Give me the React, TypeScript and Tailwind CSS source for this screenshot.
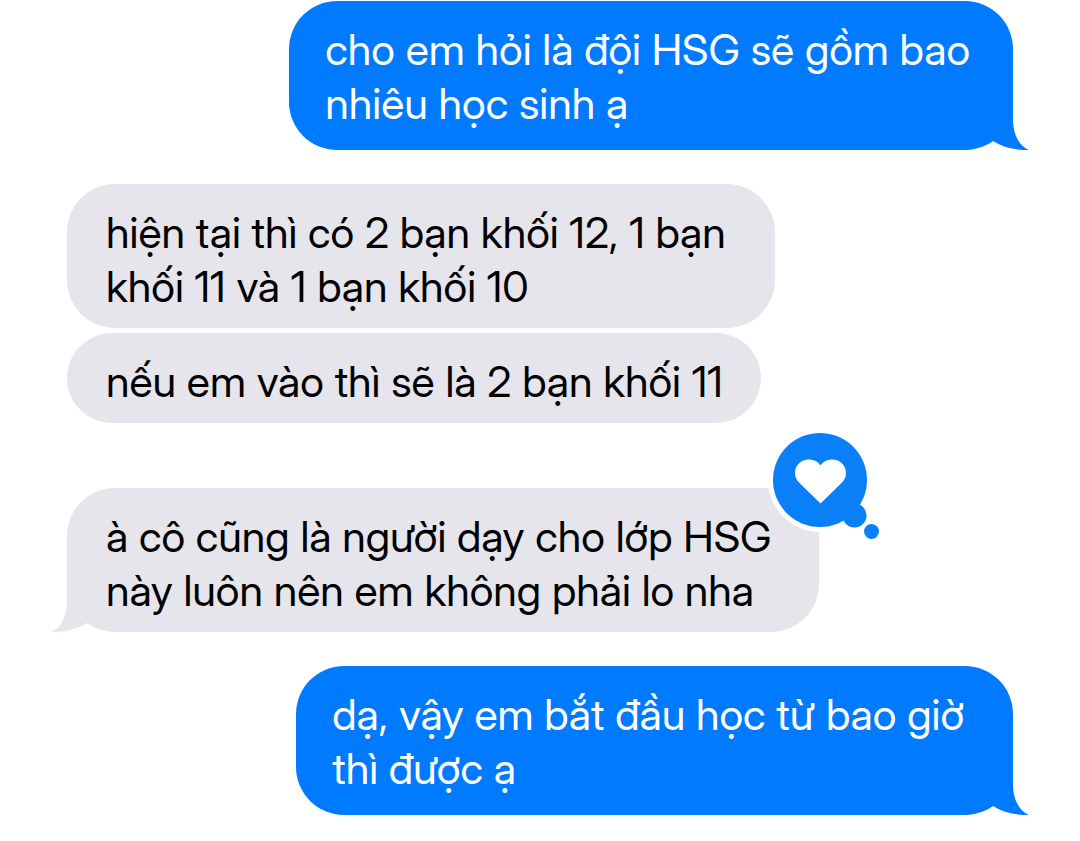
import type { ReactNode } from "react";

type Side = "sent" | "received";

interface BubbleProps {
  side: Side;
  tail?: boolean;
  loved?: boolean;
  className: string;
  children: ReactNode;
}

function Tail({ side }: { side: Side }) {
  if (side === "sent") {
    return (
      <svg className="absolute -right-4 bottom-0 h-12 w-10 text-[#007aff]" viewBox="0 0 40 48" fill="currentColor" aria-hidden="true">
        <path d="M24 0V18C24 32 30 44 40 48C25 48 13 45 4 39L0 20Z" />
      </svg>
    );
  }
  return (
    <svg className="absolute -left-4 bottom-0 h-12 w-10 text-[#e6e5eb]" viewBox="0 0 40 48" fill="currentColor" aria-hidden="true">
      <path d="M16 0V18C16 32 10 44 0 48C15 48 27 45 36 39L40 20Z" />
    </svg>
  );
}

function Reaction() {
  return (
    <svg className="absolute -top-15 -right-15 h-28 w-28" viewBox="0 0 112 112" role="img" aria-label="Loved">
      <circle cx="53" cy="52" r="52" fill="#fff" />
      <circle cx="53" cy="52" r="47" fill="#0a80f8" />
      <circle cx="87.5" cy="87.5" r="12" fill="#0a80f8" />
      <circle cx="104.5" cy="103.5" r="7.5" fill="#0a80f8" />
      <path
        d="M53.5 37.5C56 33.500 60.500 31.500 65.500 31.500C73 31.500 79 37.500 79 45C79 49 77.500 52 75 54.500L53.500 75.500L32 54.500C29.500 52 28 49 28 45C28 37.500 34 31.500 41.500 31.500C46.500 31.500 51 33.500 53.500 37.500Z"
        fill="#fff"
      />
    </svg>
  );
}

function Bubble({ side, tail, loved, className, children }: BubbleProps) {
  const colors =
    side === "sent"
      ? "self-end bg-[#007aff] text-white pl-9 pt-[21px] pb-5"
      : "self-start bg-[#e6e5eb] text-black pl-[39px] pt-[21px] pb-[15px]";
  return (
    <div className={`relative w-fit rounded-[48px] ${colors} ${className}`}>
      {tail && <Tail side={side} />}
      {loved && <Reaction />}
      <p className="relative whitespace-nowrap">{children}</p>
    </div>
  );
}

export default function App() {
  return (
    <main className="flex flex-col bg-white px-[67px] font-['Inter_Display','Inter',sans-serif] text-[43px] leading-[54px]">
      <Bubble side="sent" tail className="mt-px pr-[43px]">
        cho em hỏi là đội HSG sẽ gồm bao
        <br />
        nhiêu học sinh ạ
      </Bubble>
      <Bubble side="received" className="mt-[34px] pr-[49px]">
        hiện tại thì có 2 bạn khối 12, 1 bạn
        <br />
        khối 11 và 1 bạn khối 10
      </Bubble>
      <Bubble side="received" className="mt-[5px] pr-[38px]">
        nếu em vào thì sẽ là 2 bạn khối 11
      </Bubble>
      <Bubble side="received" tail loved className="mt-[65px] pr-12">
        à cô cũng là người dạy cho lớp HSG
        <br />
        này luôn nên em không phải lo nha
      </Bubble>
      <Bubble side="sent" tail className="mt-[34px] pr-[49px]">
        dạ, vậy em bắt đầu học từ bao giờ
        <br />
        thì được ạ
      </Bubble>
    </main>
  );
}
